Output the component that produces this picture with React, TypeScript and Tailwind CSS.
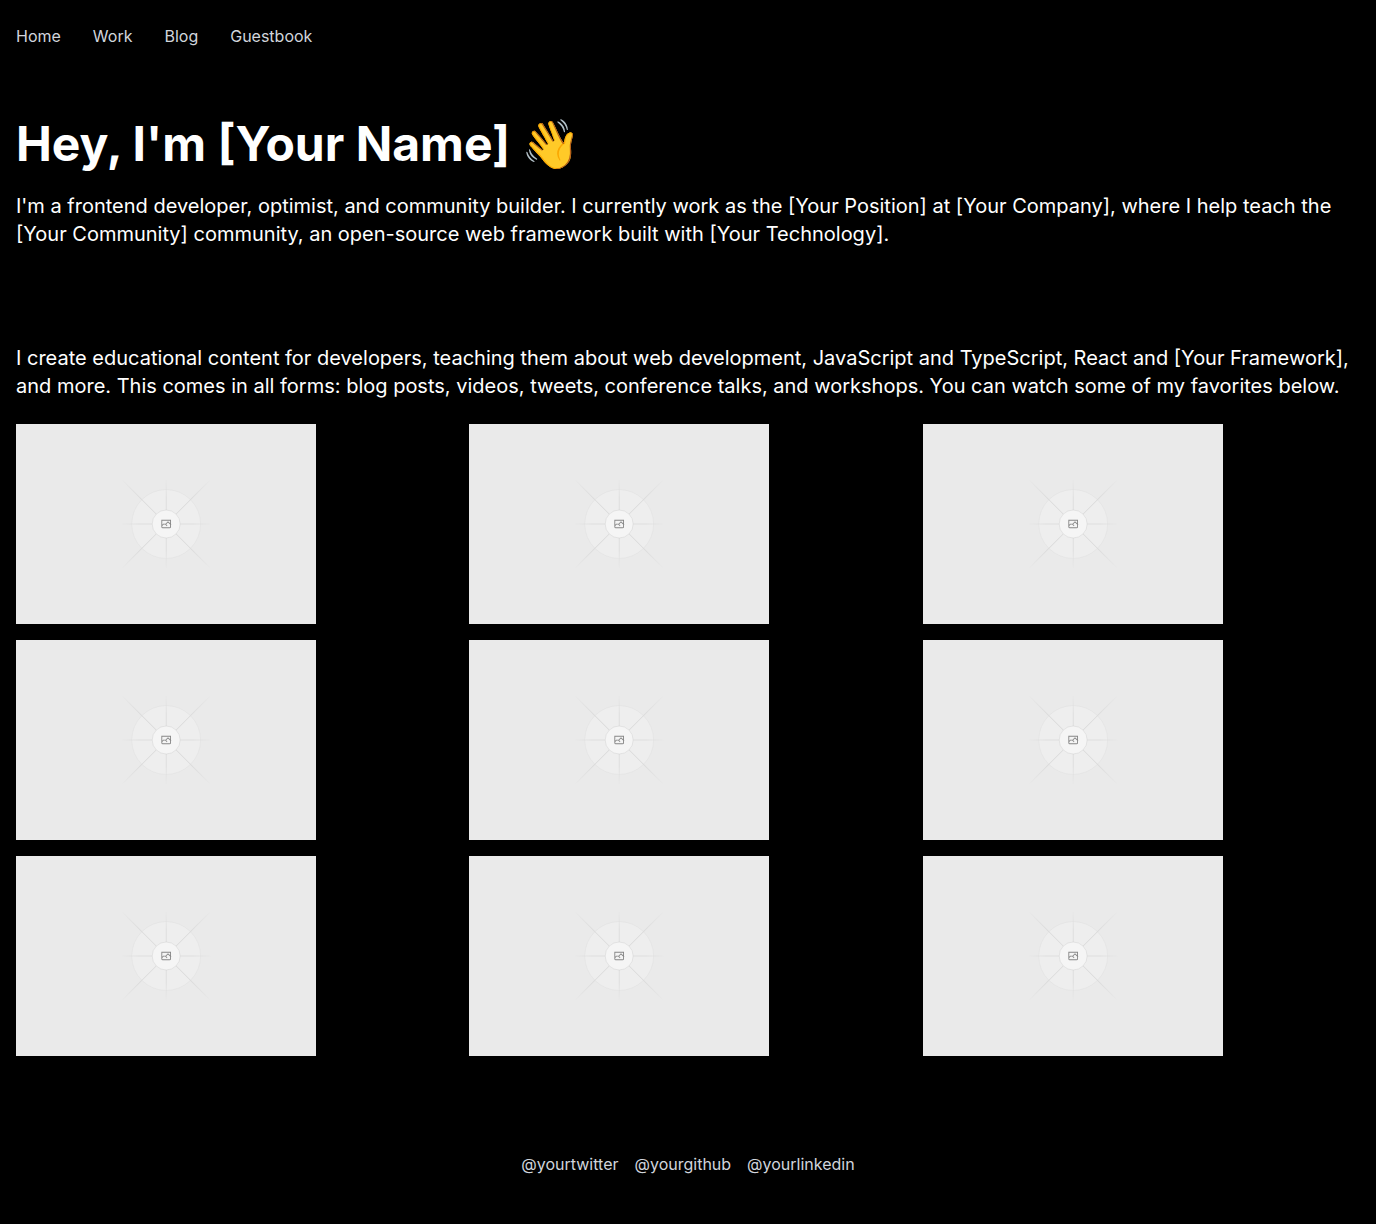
const navLinks = ["Home", "Work", "Blog", "Guestbook"];
const socialLinks = ["@yourtwitter", "@yourgithub", "@yourlinkedin"];
const videos = [1, 2, 3, 4, 5, 6, 7, 8, 9];

function Placeholder({ id }: { id: number }) {
  const fade = `fade-${id}`;
  return (
    <svg
      role="img"
      aria-label={`Video ${id}`}
      viewBox="0 200 1200 800"
      className="h-[200px] w-[300px] max-w-full bg-[#eaeaea]"
    >
      <defs>
        <linearGradient id={fade} gradientUnits="userSpaceOnUse" x1="-250" y1="0" x2="250" y2="0">
          <stop stopColor="#c9c9c9" stopOpacity="0" />
          <stop offset="0.208" stopColor="#c9c9c9" />
          <stop offset="0.792" stopColor="#c9c9c9" />
          <stop offset="1" stopColor="#c9c9c9" stopOpacity="0" />
        </linearGradient>
        <linearGradient id={`${fade}-short`} gradientUnits="userSpaceOnUse" x1="-180" y1="0" x2="180" y2="0">
          <stop stopColor="#c9c9c9" stopOpacity="0" />
          <stop offset="0.208" stopColor="#c9c9c9" />
          <stop offset="0.792" stopColor="#c9c9c9" />
          <stop offset="1" stopColor="#c9c9c9" stopOpacity="0" />
        </linearGradient>
      </defs>
      <g opacity="0.5">
        <circle cx="600.7" cy="600" r="137.5" fill="#f3f3f3" stroke="#c9c9c9" strokeOpacity="0.5" strokeWidth="2.4" />
        <g transform="translate(600.7 600)">
          <rect x="-250" y="-1.5" width="500" height="3" fill={`url(#${fade})`} transform="rotate(45)" />
          <rect x="-250" y="-1.5" width="500" height="3" fill={`url(#${fade})`} transform="rotate(-45)" />
          <rect x="-180" y="-1.5" width="360" height="3" fill={`url(#${fade}-short)`} />
          <rect x="-180" y="-1.5" width="360" height="3" fill={`url(#${fade}-short)`} transform="rotate(90)" />
        </g>
      </g>
      <circle cx="600.7" cy="600" r="56" fill="#f5f5f5" stroke="#c9c9c9" strokeOpacity="0.7" strokeWidth="2.4" />
      <path
        fill="#868686"
        fillRule="evenodd"
        clipRule="evenodd"
        d="M616.426 586.58h-31.434v16.176l3.553-3.554.531-.531h9.068l.074-.074 8.463-8.463h2.565l7.18 7.181V586.58Zm-15.715 14.654 3.698 3.699 1.283 1.282-2.565 2.565-1.282-1.283-5.2-5.199h-6.066l-5.514 5.514-.073.073v2.876a2.418 2.418 0 0 0 2.418 2.418h26.598a2.418 2.418 0 0 0 2.418-2.418v-8.317l-8.463-8.463-7.181 7.181-.071.072Zm-19.347 5.442v4.085a6.045 6.045 0 0 0 6.046 6.045h26.598a6.044 6.044 0 0 0 6.045-6.045v-7.108l1.356-1.355-1.282-1.283-.074-.073v-17.989h-38.689v23.43l-.146.146.146.147Z"
      />
    </svg>
  );
}

export default function App() {
  return (
    <div className="min-h-screen bg-black font-['Inter',sans-serif] text-white">
      <nav className="px-4 py-6">
        <ul className="flex flex-wrap gap-8">
          {navLinks.map((label) => (
            <li key={label}>
              <a href="#" className="text-gray-300 hover:text-white">
                {label}
              </a>
            </li>
          ))}
        </ul>
      </nav>
      <main>
        <section className="px-4 py-12">
          <h1 className="mb-6 text-5xl font-bold">Hey, I'm [Your Name] 👋</h1>
          <p className="text-xl">
            I'm a frontend developer, optimist, and community builder. I currently work as the [Your Position] at [Your
            Company], where I help teach the [Your Community] community, an open-source web framework built with [Your
            Technology].
          </p>
        </section>
        <section className="px-4 py-12">
          <p className="mb-6 text-xl">
            I create educational content for developers, teaching them about web development, JavaScript and
            TypeScript, React and [Your Framework], and more. This comes in all forms: blog posts, videos, tweets,
            conference talks, and workshops. You can watch some of my favorites below.
          </p>
          <div className="grid grid-cols-3 gap-4">
            {videos.map((id) => (
              <Placeholder key={id} id={id} />
            ))}
          </div>
        </section>
      </main>
      <footer className="flex flex-wrap justify-center gap-4 px-4 py-12">
        {socialLinks.map((label) => (
          <a key={label} href="#" className="text-gray-300 hover:text-white">
            {label}
          </a>
        ))}
      </footer>
    </div>
  );
}
